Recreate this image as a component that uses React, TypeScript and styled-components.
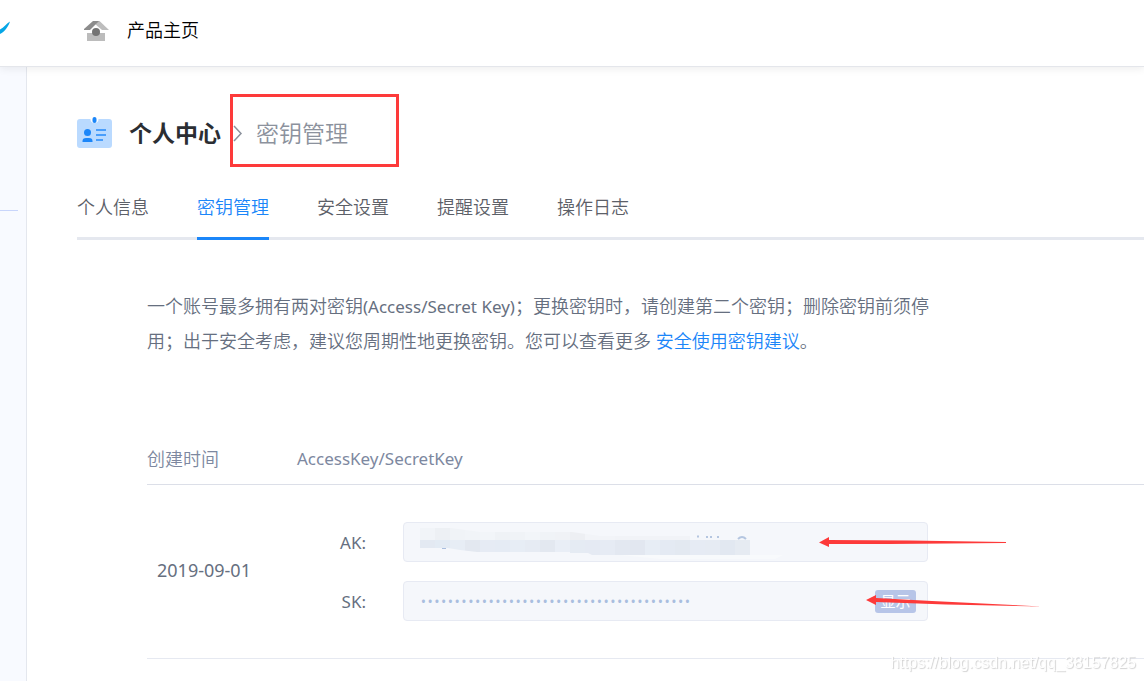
import React from "react";
import styled, { createGlobalStyle } from "styled-components";

const GlobalStyle = createGlobalStyle`
  *, *::before, *::after { box-sizing: border-box; }
  body {
    margin: 0;
    background: #fff;
    color: #666f7f;
    font-family: "Noto Sans", "Noto Sans CJK SC", sans-serif;
    font-size: 18px;
    font-weight: 350;
    overflow: hidden;
  }
  button, input { font: inherit; color: inherit; }
`;

const Page = styled.div`
  min-height: 100vh;
  display: flex;
  flex-direction: column;
`;

const TopBar = styled.header`
  display: flex;
  align-items: center;
  height: 67px;
  padding-bottom: 6px;
  border-bottom: 1px solid #e4e6eb;
  box-shadow: 0 2px 8px rgba(0, 0, 0, 0.07);
  z-index: 1;
`;

const Logo = styled.svg`
  width: 12px;
  height: 30px;
  margin-right: 72px;
`;

const HomeLink = styled.a`
  display: flex;
  align-items: center;
  gap: 18px;
  color: #000;
  line-height: 24px;
  text-decoration: none;
`;

const Columns = styled.div`
  display: flex;
  flex: 1;
`;

const Sidebar = styled.aside`
  flex: 0 0 27px;
  padding-top: 143px;
  background: #f8faff;
  border-right: 1px solid #e4e7ee;
`;

const SidebarRule = styled.hr`
  width: 18px;
  margin: 0;
  border: 0;
  border-top: 1px solid #c8d5fb;
`;

const Main = styled.main`
  flex: 1;
  min-width: 0;
  padding: 27px 0 0 50px;
`;

const Breadcrumb = styled.nav`
  display: flex;
  align-items: center;
  height: 73px;
  padding-top: 4px;
`;

const BadgeIcon = styled.svg`
  width: 35px;
  height: 32px;
  margin-right: 17px;
`;

const Title = styled.h1`
  margin: 0 9px 0 0;
  color: #2b2e33;
  font-size: 23px;
  font-weight: 700;
  line-height: 36px;
`;

const Current = styled.span`
  position: relative;
  display: flex;
  align-items: center;
  gap: 12px;
  color: #8c929d;
  font-size: 23px;
  line-height: 36px;

  &::after {
    content: "";
    position: absolute;
    inset: -21px -51px -16px 0;
    border: 3px solid #fd3a3a;
    pointer-events: none;
  }
`;

const Tabs = styled.nav`
  display: flex;
  gap: 48px;
  margin-top: 16px;
  box-shadow: inset 0 -3px #e5e8ef;
`;

const Tab = styled.button<{ $active?: boolean }>`
  height: 57px;
  padding: 0 0 8px;
  border: 0;
  border-bottom: 3px solid ${(p) => (p.$active ? "#1b86f9" : "transparent")};
  background: none;
  color: ${(p) => (p.$active ? "#1b86f9" : "#5c6068")};
  white-space: nowrap;
`;

const Content = styled.section`
  padding: 49px 0 0 70px;
`;

const Notice = styled.p`
  max-width: 800px;
  margin: 0 0 74px;
  line-height: 35px;
`;

const Latin = styled.span`
  font-size: 17px;
  font-weight: 400;
`;

const TextLink = styled.a`
  color: #1b86f9;
  text-decoration: none;
`;

const KeyTable = styled.table`
  width: 100%;
  border-collapse: separate;
  border-spacing: 0;
`;

const HeadCell = styled.th<{ $width?: number }>`
  width: ${(p) => (p.$width ? `${p.$width}px` : "auto")};
  height: 52px;
  padding: 0 0 2px;
  border-bottom: 1px solid #dcdfe8;
  color: #7d88a0;
  font-weight: 350;
  text-align: left;
`;

const Cell = styled.td`
  padding: 37px 0;
  border-bottom: 1px solid #e6e9f1;
`;

const DateCell = styled(Cell)`
  padding: 35px 0 38px 10px;
  font-weight: 400;
`;

const KeyList = styled.div`
  display: flex;
  flex-direction: column;
  gap: 19px;
`;

const KeyRow = styled.div`
  position: relative;
  display: flex;
  align-items: center;
`;

const KeyLabel = styled.label`
  width: 69px;
  margin-right: 37px;
  font-size: 17px;
  font-weight: 400;
  text-align: right;
`;

const Field = styled.div`
  position: relative;
  display: flex;
  align-items: center;
  width: 525px;
  height: 40px;
  padding: 0 11px 0 16px;
  border: 1px solid #e7eaf3;
  border-radius: 4px;
  background: #f5f7fb;
`;

const KeyInput = styled.input`
  flex: 1;
  min-width: 0;
  padding: 0;
  border: 0;
  outline: 0;
  background: none;
  color: #a9bedf;
`;

const ShowButton = styled.button`
  width: 41px;
  height: 23px;
  padding: 0;
  border: 0;
  border-radius: 3px;
  background: #b7c5e8;
  color: #fff;
  font-size: 15px;
  font-weight: 400;
  line-height: 23px;
`;

const Redaction = styled.svg`
  position: absolute;
  left: 16px;
  top: 5px;
  width: 370px;
  height: 32px;
`;

const Arrow = styled.svg<{ $left: number }>`
  position: absolute;
  left: ${(p) => p.$left}px;
  top: 12px;
  width: 190px;
  height: 20px;
  pointer-events: none;
`;

const Watermark = styled.div`
  position: fixed;
  right: 8px;
  bottom: 8px;
  color: #fff;
  font-family: "Liberation Sans", sans-serif;
  font-size: 16px;
  font-weight: 400;
  line-height: 20px;
  text-shadow: 1px 1px 1px #d2d2d2;
`;

const tabs = ["个人信息", "密钥管理", "安全设置", "提醒设置", "操作日志"];

const upperTones = ["#f1f4f8", "#edf0f4", "#f0f3f7", "#f1f4f8", "#f2f5f9", "#eff2f6", "#f0f3f7", "#f2f5f9", "#f0f3f7", "#f0f2f6", "#edeff3", "#f2f4f8", "#f2f4f8", "#f1f3f7", "#f1f3f7", "#f1f3f7", "#f1f3f7", "#f1f3f7"];
const lowerTones = ["#e3e9f2", "#e3ebf4", "#e7edf5", "#e3e8f0", "#e6ebf4", "#e5ebf4", "#e7edf5", "#e6ebf3", "#e3e8f0", "#e9eef6", "#e5ebf3", "#e5eaf3", "#e6ebf4", "#e3e8f1", "#e2e7f0", "#e7edf5", "#e4eaf3", "#e3e9f1", "#e6ebf4", "#e6ebf3", "#e2e8f1", "#e6ebf2"];

const App: React.FC = () => (
  <>
    <GlobalStyle />
    <Page>
      <TopBar>
        <Logo viewBox="0 0 12 30" aria-hidden="true">
          <path d="M0 14.6C4 12.6 6.5 8.500 10 6.500C8.6 11 5 16.500 0 19Z" fill="#06a6e6" />
        </Logo>
        <HomeLink href="#home">
          <svg width="25" height="21" viewBox="0 0 25 21" aria-hidden="true">
            <path d="M3 13H21V21H3Z" fill="#bcbcbc" />
            <path d="M9 1H15.500L25 10H18L11 4Z" fill="#bdbdbd" />
            <path d="M9 1H15L6 10H-1Z" fill="#8c8c8c" />
            <circle cx="12" cy="12" r="4" fill="#747474" />
          </svg>
          产品主页
        </HomeLink>
      </TopBar>
      <Columns>
        <Sidebar>
          <SidebarRule />
        </Sidebar>
        <Main>
          <Breadcrumb>
            <BadgeIcon viewBox="0 0 35 32" aria-hidden="true">
              <path d="M3 2H13.500A4 4 0 0 0 21.500 2H32A3 3 0 0 1 35 5V28A3 3 0 0 1 32 31H3A3 3 0 0 1 0 28V5A3 3 0 0 1 3 2Z" fill="#badaff" />
              <rect x="15.500" y="0" width="4" height="6" rx="2" fill="#1b86f9" />
              <circle cx="10.500" cy="15.500" r="3.500" fill="#1b86f9" />
              <path d="M5.500 25V24Q5.500 21 9 21H12Q15.500 21 15.500 24V25Z" fill="#1b86f9" />
              <path d="M19 13H29M19 18H29M19 23H26" stroke="#4a9efb" strokeWidth="2" />
            </BadgeIcon>
            <Title>个人中心</Title>
            <Current>
              <svg width="14" height="18" viewBox="0 0 14 18" fill="none" aria-hidden="true">
                <path d="M4 2L11 9.500L4 17" stroke="#8c929d" strokeWidth="1.500" />
              </svg>
              密钥管理
            </Current>
          </Breadcrumb>
          <Tabs>
            {tabs.map((name) => (
              <Tab key={name} type="button" $active={name === "密钥管理"}>
                {name}
              </Tab>
            ))}
          </Tabs>
          <Content>
            <Notice>
              一个账号最多拥有两对密钥<Latin>(Access/Secret Key)</Latin>；更换密钥时，请创建第二个密钥；删除密钥前须停用；出于安全考虑，建议您周期性地更换密钥。您可以查看更多{" "}
              <TextLink href="#advice">安全使用密钥建议</TextLink>。
            </Notice>
            <KeyTable>
              <thead>
                <tr>
                  <HeadCell $width={150}>创建时间</HeadCell>
                  <HeadCell>
                    <Latin>AccessKey/SecretKey</Latin>
                  </HeadCell>
                </tr>
              </thead>
              <tbody>
                <tr>
                  <DateCell>2019-09-01</DateCell>
                  <Cell>
                    <KeyList>
                      <KeyRow>
                        <KeyLabel htmlFor="ak">AK:</KeyLabel>
                        <Field>
                          <KeyInput id="ak" type="text" readOnly />
                          <Redaction viewBox="0 0 370 32" aria-hidden="true">
                            <defs>
                              <clipPath id="smear">
                                <path d="M0 0H31L60 4H152L180 8H330V27H172L168 25H150V24H57L40 22L28 20H0Z" />
                              </clipPath>
                            </defs>
                            <path d="M200 27H363L355 31H240Z" fill="#f8fafc" />
                            <path d="M277 8.500H279M287 8V10M291 8V10M298 8V10M318 11Q322 7 326 11" stroke="#b5c6e0" strokeWidth="2" fill="none" />
                            <g clipPath="url(#smear)">
                              {upperTones.map((tone, i) => (
                                <rect key={i} x={i * 15} y="0" width="15" height="12" fill={tone} />
                              ))}
                              {lowerTones.map((tone, i) => (
                                <rect key={i} x={i * 15} y="12" width="15" height="15" fill={tone} />
                              ))}
                            </g>
                            <path d="M22 20.500H26" stroke="#a9bedf" />
                          </Redaction>
                        </Field>
                        <Arrow $left={522} viewBox="0 0 190 20" aria-hidden="true">
                          <path d="M0 8.500L10 3V6L90 6.500L187 8V9L70 10L10 10V13Z" fill="#fd3a3a" />
                        </Arrow>
                      </KeyRow>
                      <KeyRow>
                        <KeyLabel htmlFor="sk">SK:</KeyLabel>
                        <Field>
                          <KeyInput
                            id="sk"
                            type="password"
                            readOnly
                            value={"0".repeat(40)}
                          />
                          <ShowButton type="button">显示</ShowButton>
                        </Field>
                        <Arrow $left={569} viewBox="0 0 190 20" aria-hidden="true">
                          <path d="M0 7L10 2V5L66 8L176 13.500L80 11.500L10 9V12Z" fill="#fd3a3a" />
                        </Arrow>
                      </KeyRow>
                    </KeyList>
                  </Cell>
                </tr>
              </tbody>
            </KeyTable>
          </Content>
        </Main>
      </Columns>
      <Watermark>https://blog.csdn.net/qq_38157825</Watermark>
    </Page>
  </>
);

export default App;
